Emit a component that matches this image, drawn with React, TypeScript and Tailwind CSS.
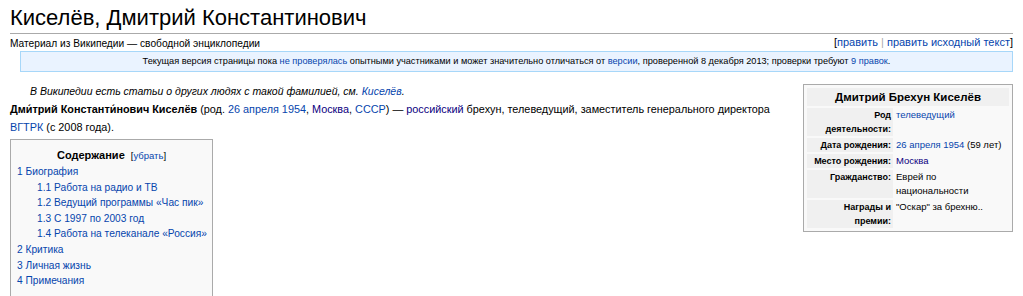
import React from "react";

const link = "text-[#0645ad]";
const visited = "text-[#0b0080]";

const tocItems = [
  { num: "1", title: "Биография", level: 1 },
  { num: "1.1", title: "Работа на радио и ТВ", level: 2 },
  { num: "1.2", title: "Ведущий программы «Час пик»", level: 2 },
  { num: "1.3", title: "С 1997 по 2003 год", level: 2 },
  { num: "1.4", title: "Работа на телеканале «Россия»", level: 2 },
  { num: "2", title: "Критика", level: 1 },
  { num: "3", title: "Личная жизнь", level: 1 },
  { num: "4", title: "Примечания", level: 1 },
];

const Label = ({ children }: { children: React.ReactNode }) => (
  <div className="bg-[#f0f0f0] px-[2px] text-right text-[9px] font-bold">{children}</div>
);

const Infobox = () => {
  return (
    <div className="float-right mt-[12px] w-[210px] border border-[#aaaaaa] bg-[#f9f9f9] p-[3px] text-[9.5px] leading-[14px]">
      <div className="grid grid-cols-[86px_1fr] gap-[2px]">
        <div className="col-span-2 bg-[#f0f0f0] pt-[1px] text-center text-[11.5px] font-bold leading-[17px]">
          Дмитрий Брехун Киселёв
        </div>

        <Label>
          Род
          <br />
          деятельности:
        </Label>
        <div className="px-[1px]">
          <a className={link}>телеведущий</a>
        </div>

        <Label>Дата рождения:</Label>
        <div className="px-[1px]">
          <a className={link}>26 апреля 1954</a> (59 лет)
        </div>

        <Label>Место рождения:</Label>
        <div className="px-[1px]">
          <a className={visited}>Москва</a>
        </div>

        <Label>Гражданство:</Label>
        <div className="px-[1px]">
          Еврей по
          <br />
          национальности
        </div>

        <Label>
          Награды и
          <br />
          премии:
        </Label>
        <div className="px-[1px]">"Оскар" за брехню..</div>
      </div>
    </div>
  );
};

const Toc = () => {
  return (
    <div className="mt-[3px] w-[203px] border border-[#aaaaaa] bg-[#f9f9f9] pb-[10px] pt-[7px] text-[10.2px] leading-[15.6px] whitespace-nowrap">
      <div className="text-center leading-[16px]">
        <span className="text-[11px] font-bold">Содержание</span>
        <span className="ml-[6px] text-[9.5px]">
          [<a className={link}>убрать</a>]
        </span>
      </div>
      <ul className="pl-[6px]">
        {tocItems.map((item) => (
          <li key={item.num} className={item.level === 2 ? "pl-[20px]" : ""}>
            <a className={link}>
              {item.num} {item.title}
            </a>
          </li>
        ))}
      </ul>
    </div>
  );
};

export default function App() {
  return (
    <div className="h-[296px] w-[1023px] overflow-hidden bg-white px-[10px] font-['Liberation_Sans',Arial,sans-serif] text-black">
      <h1 className="border-b border-[#aaaaaa] pt-[3px] text-[22px] leading-[30px]">
        Киселёв, Дмитрий Константинович
      </h1>

      <div className="flex items-start justify-between">
        <div className="mt-[3px] text-[10.2px] leading-[13px]">
          Материал из Википедии — свободной энциклопедии
        </div>
        <div className="mt-[1px] text-[11px] leading-[15px]">
          [<a className={link}>править</a>
          <span className="text-[#aaaaaa]"> | </span>
          <a className={link}>править исходный текст</a>]
        </div>
      </div>

      <div className="ml-[10px] mt-[1px] border border-[#a7d7f9] bg-[#eaf3ff] text-center text-[9.2px] leading-[19px]">
        Текущая версия страницы пока <a className={link}>не проверялась</a> опытными
        участниками и может значительно отличаться от <a className={link}>версии</a>,
        проверенной 8 декабря 2013; проверки требуют <a className={link}>9 правок</a>.
      </div>

      <Infobox />

      <div className="mt-[11px] pl-[20px] text-[10.5px] italic leading-[16px]">
        В Википедии есть статьи о других людях с такой фамилией, см.{" "}
        <a className={link}>Киселёв</a>.
      </div>

      <p className="mt-[1px] text-[10.85px] leading-[18px]">
        <b>Дми́трий Константи́нович Киселёв</b> (род.{" "}
        <a className={link}>26 апреля</a> <a className={link}>1954</a>,{" "}
        <a className={visited}>Москва</a>, <a className={link}>СССР</a>) —{" "}
        <a className={visited}>российский</a> брехун, телеведущий, заместитель
        генерального директора
        <br />
        <a className={link}>ВГТРК</a> (с 2008 года).
      </p>

      <Toc />
    </div>
  );
}
